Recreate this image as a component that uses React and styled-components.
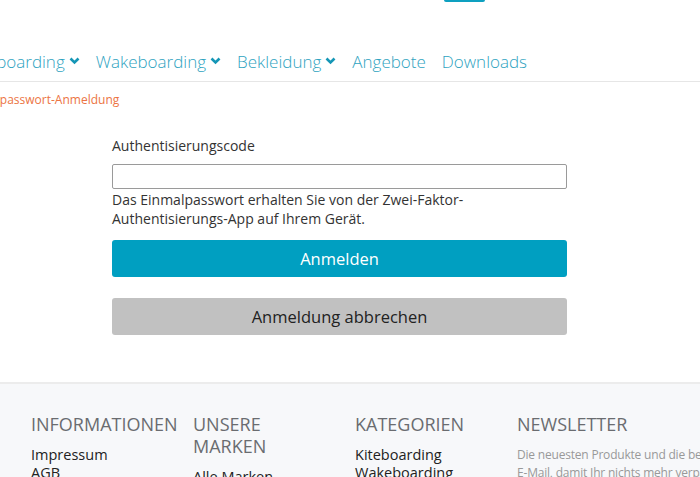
import React from 'react';
import styled, {createGlobalStyle} from 'styled-components';

const Global = createGlobalStyle`
  html, body {
    margin: 0;
    padding: 0;
    background: #fff;
    overflow: hidden;
  }
  body {
    font-family: "Open Sans", "Liberation Sans", sans-serif;
    color: #333;
  }
`;

const Page = styled.div`
  width: 700px;
  height: 477px;
  overflow: hidden;
`;

const Header = styled.header`
  border-bottom: 1px solid #e6e6e6;
`;

const TopBar = styled.div`
  height: 41px;
  display: flex;
  padding-left: 444px;
`;

const CartEdge = styled.div`
  width: 41px;
  height: 2px;
  background: #0ea0c0;
  border-radius: 0 0 2px 2px;
`;

const Nav = styled.nav`
  height: 40px;
  display: flex;
  justify-content: flex-end;
  align-items: center;
  gap: 16px;
  padding-right: 173px;
  white-space: nowrap;
`;

const NavItem = styled.a`
  display: flex;
  align-items: center;
  gap: 4px;
  font-size: 17px;
  font-weight: 300;
  color: #2fa3bf;
  text-decoration: none;
`;

const Chevron = () => (
  <svg width="11" height="8" viewBox="0 0 11 8">
    <path d="M1.5 1.5 L5.5 5.5 L9.5 1.5" fill="none" stroke="#1596b6" strokeWidth="2.6" />
  </svg>
);

const Crumb = styled.div`
  height: 35px;
  display: flex;
  align-items: center;
  font-size: 12px;
  color: #ec7443;
  margin-left: -38px;
`;

const Form = styled.form`
  width: 455px;
  margin: 19px 0 0 112px;
  display: flex;
  flex-direction: column;
`;

const Label = styled.label`
  font-size: 14px;
  line-height: 20px;
  margin-bottom: 8px;
`;

const Input = styled.input`
  box-sizing: border-box;
  height: 25px;
  border: 1px solid #9a9a9a;
  border-radius: 2px;
  margin: 0;
`;

const Help = styled.p`
  margin: 1px 0 12px;
  font-size: 14px;
  line-height: 19px;
`;

const Button = styled.button`
  height: 37px;
  border: 0;
  border-radius: 3px;
  font-family: inherit;
  font-size: 16.5px;
  background: ${p => (p.$secondary ? '#c1c1c1' : '#009fc1')};
  color: ${p => (p.$secondary ? '#222' : '#fff')};
  margin-bottom: ${p => (p.$secondary ? '0' : '21px')};
`;

const Footer = styled.footer`
  margin-top: 47px;
  border-top: 2px solid #ececec;
  background: #f7f8fa;
  height: 200px;
  display: grid;
  grid-template-columns: repeat(4, 162px);
  padding: 29px 0 0 16px;
`;

const Column = styled.div`
  padding: 0 15px;
`;

const Heading = styled.h4`
  margin: 0 0 11px;
  font-size: 18px;
  font-weight: 400;
  line-height: 22px;
  color: #6a6c70;
  text-transform: uppercase;
  white-space: ${p => (p.$nowrap ? 'nowrap' : 'normal')};
`;

const LinkItem = styled.div`
  font-size: 14.5px;
  line-height: 18px;
  color: #222;
`;

const Note = styled.p`
  margin: 0;
  font-size: 12px;
  letter-spacing: -0.2px;
  line-height: 18px;
  color: #999;
  white-space: nowrap;
`;

export default function App() {
  return (
    <Page>
      <Global />
      <Header>
        <TopBar>
          <CartEdge />
        </TopBar>
        <Nav>
          <NavItem>Kiteboarding <Chevron /></NavItem>
          <NavItem>Wakeboarding <Chevron /></NavItem>
          <NavItem>Bekleidung <Chevron /></NavItem>
          <NavItem>Angebote</NavItem>
          <NavItem>Downloads</NavItem>
        </Nav>
      </Header>
      <Crumb>Einmalpasswort-Anmeldung</Crumb>
      <Form onSubmit={e => e.preventDefault()}>
        <Label htmlFor="code">Authentisierungscode</Label>
        <Input id="code" type="text" />
        <Help>
          Das Einmalpasswort erhalten Sie von der Zwei-Faktor-
          <br />
          Authentisierungs-App auf Ihrem Gerät.
        </Help>
        <Button type="submit">Anmelden</Button>
        <Button type="button" $secondary>Anmeldung abbrechen</Button>
      </Form>
      <Footer>
        <Column>
          <Heading $nowrap>Informationen</Heading>
          <LinkItem>Impressum</LinkItem>
          <LinkItem>AGB</LinkItem>
        </Column>
        <Column>
          <Heading>Unsere Marken</Heading>
          <LinkItem>Alle Marken</LinkItem>
        </Column>
        <Column>
          <Heading>Kategorien</Heading>
          <LinkItem>Kiteboarding</LinkItem>
          <LinkItem>Wakeboarding</LinkItem>
        </Column>
        <Column>
          <Heading>Newsletter</Heading>
          <Note>Die neuesten Produkte und die besten Angebote per</Note>
          <Note>E-Mail, damit Ihr nichts mehr verpasst.</Note>
        </Column>
      </Footer>
    </Page>
  );
}
